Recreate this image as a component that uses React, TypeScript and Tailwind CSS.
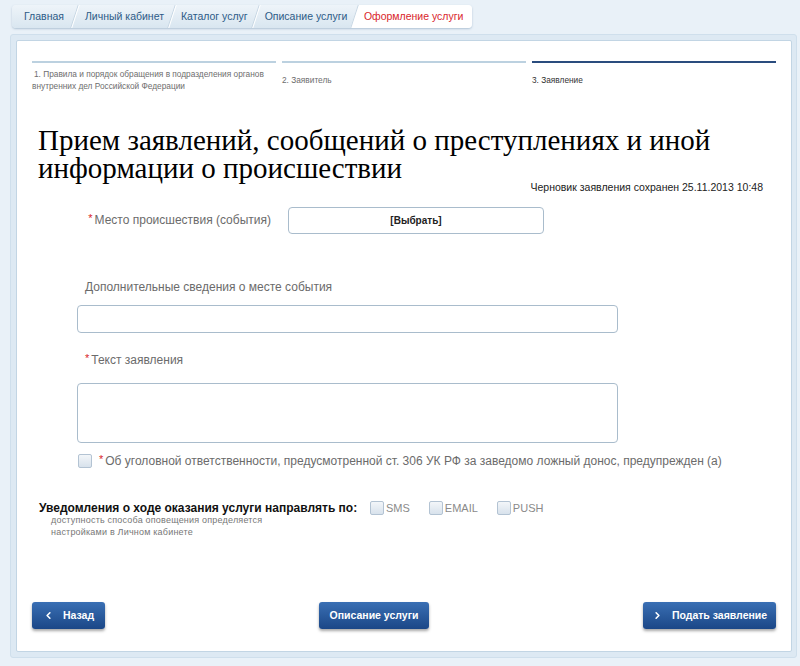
import React from "react";
import { ChevronLeft, ChevronRight } from "lucide-react";

const Req = () => <span className="text-[#d9262b] text-[11px] mr-[2px] relative -top-[2px]">*</span>;

const Box = () => (
  <span className="inline-block w-[14px] h-[14px] rounded-[2px] border border-[#b3c3d3] bg-gradient-to-b from-[#f3f6f9] to-[#d8e2ec] shrink-0" />
);

const Sep = () => (
  <span className="flex h-[23px] -skew-x-[18deg] shrink-0">
    <span className="w-px h-full bg-[#c6d6e3]" />
    <span className="w-px h-full bg-white" />
  </span>
);

const BlueBtn = ({ children, w }: { children: React.ReactNode; w: string }) => (
  <button
    className={`${w} h-[27px] rounded-[3px] bg-gradient-to-b from-[#3a6fb4] to-[#1b4787] text-white text-[10.5px] font-bold flex items-center justify-center gap-[9px] shadow-[0_2px_3px_rgba(0,0,0,0.35)]`}
  >
    {children}
  </button>
);

export default function App() {
  return (
    <div
      className="w-[800px] h-[666px] bg-[#e9f1f8] overflow-hidden"
      style={{ fontFamily: '"Liberation Sans", Arial, sans-serif' }}
    >
      {/* Tabs */}
      <div className="pt-[5px] pl-[12px]">
        <div className="flex w-[460px] h-[23px] rounded-[4px] overflow-hidden bg-gradient-to-b from-[#eef4f9] to-[#d9e6f0] shadow-[0_1px_2px_rgba(120,150,180,0.5)] text-[10.5px] text-[#2d5b87] items-center whitespace-nowrap">
          <span className="pl-[12px] pr-[10px] shrink-0">Главная</span>
          <Sep />
          <span className="pl-[9px] pr-[7px] shrink-0">Личный кабинет</span>
          <Sep />
          <span className="pl-[8px] pr-[7px] shrink-0">Каталог услуг</span>
          <Sep />
          <span className="pl-[8px] pr-[7px] shrink-0">Описание услуги</span>
          <span className="flex-1 h-full -skew-x-[18deg] bg-white border-l border-[#c6d6e3] -mr-[10px] flex items-center">
            <span className="skew-x-[18deg] pl-[9px] text-[#d9262b]">Оформление услуги</span>
          </span>
        </div>
      </div>

      {/* Panel frame */}
      <div className="mt-[6px] ml-[10px] w-[787px] bg-[#dde9f3] border border-[#cfdfec] rounded-[3px] p-[5px] pr-[0px]">
        <div className="w-[776px] h-[612px] bg-white border border-[#c2d5e4] rounded-[2px] px-[15px] pt-[20px] flex flex-col">
          {/* Steps */}
          <div className="grid grid-cols-3 gap-x-[6px] text-[8.3px] leading-[12px] text-[#6e6e6e]">
            <div>
              <div className="h-[2px] bg-[#bcd1e0]" />
              <div className="mt-[5px]"><span className="pl-[2px]">1. Правила и порядок обращения в подразделения органов</span><br />внутренних дел Российской Федерации</div>
            </div>
            <div>
              <div className="h-[2px] bg-[#bcd1e0]" />
              <div className="mt-[11px]">2. Заявитель</div>
            </div>
            <div>
              <div className="h-[2px] bg-[#2a4c7e]" />
              <div className="mt-[11px] text-[#333]">3. Заявление</div>
            </div>
          </div>

          {/* Heading */}
          <h1
            className="mt-[34px] pl-[6px] text-[29px] leading-[28px] text-black"
            style={{ fontFamily: '"Liberation Serif", "Times New Roman", serif' }}
          >
            Прием заявлений, сообщений о преступлениях и иной
            <br />
            информации о происшествии
          </h1>
          <div className="text-right pr-[13px] -mt-[2px] text-[10.5px] text-[#222]">
            Черновик заявления сохранен 25.11.2013 10:48
          </div>

          {/* Place */}
          <div className="flex items-center mt-[11px]">
            <div className="w-[256px] text-right pr-[17px] text-[12px] text-[#6b6b6b]">
              <Req />Место происшествия (события)
            </div>
            <button className="w-[256px] h-[27px] rounded-[4px] border border-[#a9bccc] bg-white text-[10px] font-bold text-[#222]">
              [Выбрать]
            </button>
          </div>

          {/* Additional info */}
          <div className="mt-[44px] pl-[53px] text-[12px] text-[#6b6b6b]">Дополнительные сведения о месте события</div>
          <div className="mt-[9px] ml-[45px] w-[541px] h-[28px] rounded-[4px] border border-[#a9bccc]" />

          <div className="mt-[18px] pl-[53px] text-[12px] text-[#6b6b6b]"><Req />Текст заявления</div>
          <div className="mt-[14px] ml-[45px] w-[541px] h-[60px] rounded-[4px] border border-[#a9bccc]" />

          <div className="mt-[9px] ml-[46px] flex items-center gap-[7px] text-[12px] text-[#6b6b6b]">
            <Box />
            <span><Req />Об уголовной ответственности, предусмотренной ст. 306 УК РФ за заведомо ложный донос, предупрежден (а)</span>
          </div>

          {/* Notifications */}
          <div className="mt-[29px] pl-[7px] flex items-center">
            <span className="text-[12px] font-bold text-[#111] w-[331px]">Уведомления о ходе оказания услуги направлять по:</span>
            <span className="flex items-center gap-[2px] text-[11px] text-[#8a8a8a]"><Box />SMS</span>
            <span className="ml-[19px] flex items-center gap-[2px] text-[11px] text-[#8a8a8a]"><Box />EMAIL</span>
            <span className="ml-[19px] flex items-center gap-[2px] text-[11px] text-[#8a8a8a]"><Box />PUSH</span>
          </div>
          <div className="-mt-[3px] pl-[19px] text-[9px] leading-[12px] text-[#777] tracking-[0.2px]">
            доступность способа оповещения определяется
            <br />
            настройками в Личном кабинете
          </div>

          {/* Buttons */}
          <div className="mt-auto mb-[22px] flex justify-between">
            <BlueBtn w="w-[73px]">
              <ChevronLeft size={11} strokeWidth={3.5} />
              <span>Назад</span>
            </BlueBtn>
            <BlueBtn w="w-[110px]">Описание услуги</BlueBtn>
            <BlueBtn w="w-[133px]">
              <ChevronRight size={11} strokeWidth={3.5} />
              <span>Подать заявление</span>
            </BlueBtn>
          </div>
        </div>
      </div>
    </div>
  );
}
